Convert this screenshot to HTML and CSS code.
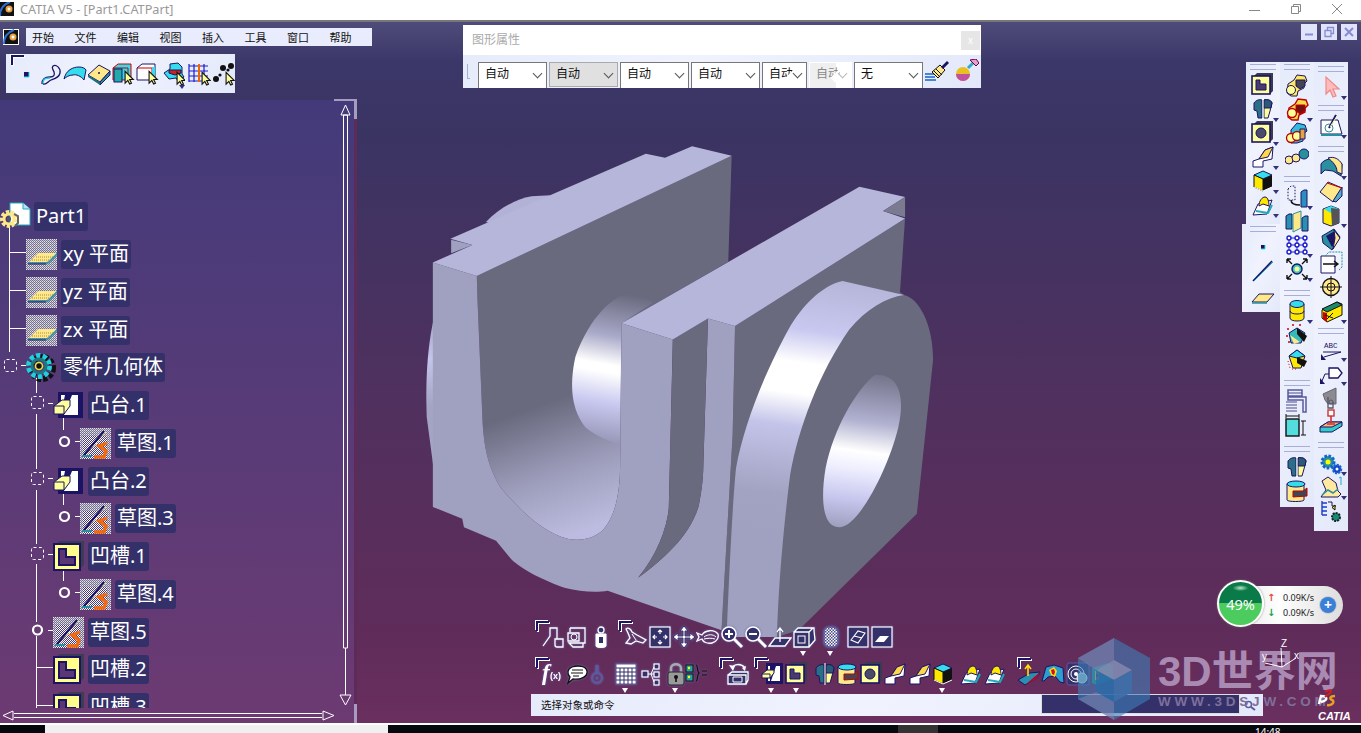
FILE: index.html
```html
<!DOCTYPE html>
<html lang="zh">
<head>
<meta charset="utf-8">
<title>CATIA V5 - [Part1.CATPart]</title>
<link rel="stylesheet" href="styles.css">
</head>
<body>
<svg class="defs" aria-hidden="true">
<defs>
<pattern id="chk" width="2" height="2" patternUnits="userSpaceOnUse"><rect width="2" height="2" fill="#77708f"/><rect width="1" height="1" fill="#e4e4ec"/><rect x="1" y="1" width="1" height="1" fill="#c4c4cc"/></pattern>
<pattern id="chk2" width="2" height="2" patternUnits="userSpaceOnUse"><rect width="2" height="2" fill="#4a3a80"/><rect width="1" height="1" fill="#fff"/><rect x="1" y="1" width="1" height="1" fill="#fff"/></pattern>
<pattern id="chk3" width="3" height="3" patternUnits="userSpaceOnUse"><rect width="3" height="3" fill="#fff"/><rect width="1.5" height="1.5" fill="#4a4a8a"/><rect x="1.5" y="1.5" width="1.5" height="1.5" fill="#4a4a8a"/></pattern>

<symbol id="cur" viewBox="0 0 24 24"><path d="M11 9v13l3-3 2 4 2-1-2-4h4z" fill="#ff9" stroke="#111" stroke-width="1.2"/></symbol>
<symbol id="t-pt" viewBox="0 0 24 24"><rect x="9" y="10" width="5" height="5" fill="#1b1464"/><path d="M14 10v5H9" fill="none" stroke="#3de" /></symbol>
<symbol id="t-curve" viewBox="0 0 24 24"><path d="M3 22c0-6 4-7 8-7s5-2 4-5-3-4-1-6c3-2 8 2 7 7s-6 6-9 7-4 5-8 4" fill="none" stroke="#1b1464" stroke-width="1.3"/><path d="M4 21c0-5 4-5 7-5" fill="none" stroke="#2ce" stroke-width="1.3"/></symbol>
<symbol id="t-surf" viewBox="0 0 24 24"><path d="M1 17C3 8 10 5 16 5c3 0 6 1 7 3l-2 10c-3-4-8-6-11-5-4 0-7 2-9 4z" fill="#3de" stroke="#1b1464"/></symbol>
<symbol id="t-box" viewBox="0 0 24 24"><path d="M1 13 12 3l11 6-10 11z" fill="#ffe88a" stroke="#1b1464"/><path d="M13 20 23 9v4L13 23z" fill="#2a8f9f" stroke="#1b1464"/><path d="M1 13l12 7v3L1 15z" fill="#1b6f7f"/><circle cx="12" cy="11" r="1" fill="#1b1464"/></symbol>
<symbol id="t-solid" viewBox="0 0 24 24"><path d="M2 6l5-4h13v13l-3 3H2z" fill="#3de" stroke="#c00"/><path d="M2 6h15v12" fill="none" stroke="#c00"/><rect x="3" y="7" width="8" height="13" fill="#2aa" stroke="#1b1464"/><use href="#cur" x="4" y="1" width="22" height="22"/></symbol>
<symbol id="t-wire" viewBox="0 0 24 24"><path d="M2 6l5-4h13v13l-3 3H2z" fill="#fff" stroke="#1b1464"/><path d="M2 6h15v12" fill="none" stroke="#c00"/><rect x="17" y="5" width="3" height="13" fill="#3de"/><use href="#cur" x="4" y="1" width="22" height="22"/></symbol>
<symbol id="t-multi" viewBox="0 0 24 24"><path d="M3 11l6-4V2l8-1 4 4v7l2 3-6 4-2-3-7 1z" fill="#3de" stroke="#1b1464"/><path d="M8 8h12v3l-6 2-6-2z" fill="#c22" stroke="#1b1464"/><use href="#cur" x="6" y="2" width="22" height="22"/></symbol>
<symbol id="t-grid" viewBox="0 0 24 24"><path d="M2 2v18M7 2v18M12 2v18M17 2v18M2 4h19M2 9h19M2 14h19M2 19h19" stroke="#1c1ccc" stroke-width="1.2" fill="none"/><path d="M12 2v18" stroke="#e60" stroke-width="2"/><use href="#cur" x="5" y="2" width="22" height="22"/></symbol>
<symbol id="t-dots" viewBox="0 0 24 24"><g fill="#111"><circle cx="5" cy="17" r="3"/><circle cx="9" cy="13" r="1.6"/><circle cx="12" cy="6" r="3"/><circle cx="20" cy="4" r="3"/><circle cx="17" cy="8" r="1.6"/></g><use href="#cur" x="5" y="2" width="22" height="22"/></symbol>

<symbol id="pocket" viewBox="0 0 24 24"><path d="M3 3 6 0h16v18l-3 3z" fill="#3a3a50"/><rect x="1" y="3" width="18" height="18" fill="#ff9" stroke="#1b1464" stroke-width="1.6"/><path d="M5 7h4v4h6v6H5z" fill="#4a3a70" stroke="#1b1464"/></symbol>
<symbol id="boss" viewBox="0 0 24 24"><rect x="6" y="1" width="17" height="21" fill="#1b1464"/><rect x="8" y="4" width="12" height="15" fill="#fff"/><path d="M10 4h6l-5 15h-1z" fill="#1b1464"/><path d="M2 12l5-4h7v3l-4 5H2z" fill="#ff9" stroke="#1b1464"/><path d="M2 12h8v4" fill="none" stroke="#1b1464"/></symbol>
<symbol id="split" viewBox="0 0 24 24"><path d="M3 6c2-3 6-4 8-3v18H7l-1-7-3-1z" fill="#2a6f85" stroke="#1b1464"/><path d="M13 3c3-1 7 0 8 3l-2 8-2 7h-4z" fill="#ff9" stroke="#1b1464"/><path d="M13 3c3-1 7 0 8 3l-1 5h-7z" fill="#2a5a75" stroke="#1b1464"/><path d="M12 1v22" stroke="#fff"/></symbol>
<symbol id="hole" viewBox="0 0 24 24"><path d="M3 3 6 0h16v18l-3 3z" fill="#3a3a50"/><rect x="1" y="3" width="18" height="18" fill="#ff9" stroke="#1b1464" stroke-width="1.6"/><circle cx="10" cy="12" r="5" fill="#4a4a6a" stroke="#1b1464"/></symbol>
<symbol id="rib" viewBox="0 0 24 24"><path d="M2 22v-6l6-2 6-9 8-3-1 12-9 2v6z" fill="#fff" stroke="#1b1464"/><path d="M8 14l6-9 8-3-5 10z" fill="#ffd84a" stroke="#1b1464"/></symbol>
<symbol id="sweep" viewBox="0 0 24 24"><path d="M2 22l5-11 14-4-5 14z" fill="#fff" stroke="#1b1464"/><path d="M8 13c0-5 3-9 6-9s4 5 4 9l-6-2z" fill="#ffe800" stroke="#1b1464"/><path d="M5 18l12 2 4-8" stroke="#2ab" stroke-width="2" fill="none"/></symbol>
<symbol id="cube" viewBox="0 0 24 24"><path d="M3 6l9-4 9 4-9 4z" fill="#3de" stroke="#1b1464"/><path d="M3 6v12l9 4V10z" fill="#ffe800" stroke="#111"/><path d="M12 10l9-4v12l-9 4z" fill="#111"/><path d="M3 18l9 4 9-4" fill="none" stroke="#fff"/></symbol>
<symbol id="r-pt" viewBox="0 0 24 24"><rect x="10" y="10" width="4" height="4" fill="#1b1464"/><path d="M14 10v4h-4" fill="none" stroke="#3de"/></symbol>
<symbol id="r-line" viewBox="0 0 24 24"><path d="M2 22 21 2" stroke="#1b1464" stroke-width="1.6"/><path d="M3 22 22 3" stroke="#2ac" stroke-width="1"/></symbol>
<symbol id="r-plane" viewBox="0 0 24 24"><path d="M1 19 8 11h15l-7 8z" fill="#ffe88a" stroke="#1b1464"/><path d="M1 20h15" stroke="#2a8f9f" stroke-width="1.5"/></symbol>

<symbol id="m-yel" viewBox="0 0 24 24"><path d="M3 11l6-4 3-5 8 1 2 5-3 3v4l-6 3-1 5H6l-4-3z" fill="#ffe860" stroke="#1b1464"/><circle cx="6" cy="17" r="4.5" fill="#ff9" stroke="#1b1464"/><path d="M11 7h9v6l-5 3-4-3z" fill="#445" stroke="#1b1464"/></symbol>
<symbol id="m-red" viewBox="0 0 24 24"><path d="M4 11l6-4 3-5 8 1 2 5-3 3v4l-6 3-1 5H7l-4-3z" fill="#ffd84a" stroke="#b00" stroke-width="1.4"/><circle cx="7" cy="16" r="4.5" fill="#ff9" stroke="#b00" stroke-width="1.4"/><path d="M11 8h9v6l-5 3-4-3z" fill="#711" stroke="#b00"/></symbol>
<symbol id="m-cyan" viewBox="0 0 24 24"><path d="M6 9l6-7 8 2 2 6-4 3v7l-6 2H6z" fill="#3bd" stroke="#1b1464"/><circle cx="6" cy="17" r="4.5" fill="#ff9" stroke="#b00" stroke-width="1.3"/><circle cx="12" cy="15" r="4.5" fill="#ff9" stroke="#b00" stroke-width="1.3"/><path d="M15 8h5v10h-5z" fill="#e8a040" stroke="#1b1464"/></symbol>
<symbol id="m-circ" viewBox="0 0 24 24"><circle cx="4" cy="15" r="4" fill="#ffe88a" stroke="#1b1464"/><circle cx="11" cy="13" r="4" fill="#ffe88a" stroke="#1b1464"/><circle cx="19" cy="9" r="5" fill="#2a8f9f" stroke="#1b1464"/></symbol>
<symbol id="m-trans" viewBox="0 0 24 24"><path d="M3 4l3-3h4v14H3z" fill="none" stroke="#1b1464" stroke-dasharray="1.5 1.5"/><path d="M6 15c0 4 3 5 9 5" fill="none" stroke="#111" stroke-width="1.5"/><path d="M16 7l3-2h3v17h-6z" fill="#2a8fc0" stroke="#1b1464"/></symbol>
<symbol id="m-mirror" viewBox="0 0 24 24"><path d="M1 7l3-2h3v15H1z" fill="#2a8fb0" stroke="#1b1464"/><path d="M8 5l8-3v17l-8 4z" fill="#ffe88a" stroke="#2a8f9f"/><path d="M17 9l3-2h3v15h-6z" fill="#2a8fb0" stroke="#1b1464"/></symbol>
<symbol id="m-dots" viewBox="0 0 24 24"><path d="M4 5h16M4 12h16M4 19h16M4 5v14M12 5v14M20 5v14" stroke="#1c1ccc" fill="none"/><g fill="#fff" stroke="#1c1ccc" stroke-width="1.4"><circle cx="4" cy="5" r="2"/><circle cx="12" cy="5" r="2"/><circle cx="20" cy="5" r="2"/><circle cx="4" cy="12" r="2"/><circle cx="12" cy="12" r="2"/><circle cx="20" cy="12" r="2"/><circle cx="4" cy="19" r="2"/><circle cx="12" cy="19" r="2"/><circle cx="20" cy="19" r="2"/></g></symbol>
<symbol id="m-scale" viewBox="0 0 24 24"><circle cx="12" cy="12" r="5" fill="#3cb" stroke="#1b1464" stroke-width="1.4"/><circle cx="12" cy="12" r="2.5" fill="#ff9"/><path d="M2 2l5 5M22 2l-5 5M2 22l5-5M22 22l-5-5M2 2h4M2 2v4M22 2h-4M22 2v4M2 22h4M2 22v-4M22 22h-4M22 22v-4" stroke="#111" stroke-width="1.4" fill="none"/></symbol>
<symbol id="m-cyl" viewBox="0 0 24 24"><path d="M5 5v14c0 4 14 4 14 0V5z" fill="#ffe800" stroke="#1b1464"/><ellipse cx="12" cy="5" rx="7" ry="3.5" fill="#3de" stroke="#1b1464"/><path d="M5 12c0 4 14 4 14 0" fill="none" stroke="#1b1464"/></symbol>
<symbol id="m-dot1" viewBox="0 0 24 24"><path d="M4 10l8-5 8 5-4 10H6z" fill="#3bb" stroke="#1b1464"/><path d="M12 5l10 8-3 6-7-8z" fill="#111"/><path d="M5 12l10 7-6 2z" fill="#ffe88a"/><circle cx="3" cy="6" r="1" fill="#c00"/><circle cx="8" cy="2" r="1" fill="#c00"/><circle cx="15" cy="2" r="1" fill="#c00"/><circle cx="2" cy="13" r="1" fill="#c00"/><circle cx="4" cy="19" r="1" fill="#c00"/></symbol>
<symbol id="m-dot2" viewBox="0 0 24 24"><path d="M4 9l8-6 8 6-4 12H8z" fill="#ffe800" stroke="#1b1464"/><path d="M4 9l8-6 8 6-8 2z" fill="#3de" stroke="#1b1464"/><path d="M12 10l10 4-3 6-7-4z" fill="#111"/><path d="M3 14l2 7M7 22h6" stroke="#c00" stroke-dasharray="1 2"/></symbol>
<symbol id="m-frame" viewBox="0 0 24 24"><path d="M3 1h14v6H3zM3 8h18v15h-3V11H3z" fill="none" stroke="#5a5a9a" stroke-width="1.5"/><path d="M1 13h11M1 16h11M1 19h11M1 22h11M3 4h14" stroke="#4a4a8a"/></symbol>
<symbol id="m-dim" viewBox="0 0 24 24"><rect x="1" y="6" width="13" height="17" fill="#5dd" stroke="#111" stroke-width="1.4"/><path d="M1 3h13M1 1v4M14 1v4M18 8v14M16 8h5M16 22h5" stroke="#111" fill="none"/></symbol>
<symbol id="m-cut" viewBox="0 0 24 24"><path d="M2 5v16c0 2 17 2 17 0V5z" fill="#ffe88a" stroke="#1b1464"/><ellipse cx="11" cy="5" rx="9" ry="3" fill="#3de" stroke="#1b1464"/><path d="M8 12h10l4-3v8l-14 1z" fill="#445" stroke="#b00"/></symbol>
<symbol id="arrow" viewBox="0 0 24 24"><path d="M7 2v17l4-4 3 7 3-1-3-7h6z" fill="#fbb" stroke="#e88" stroke-width="1.2"/></symbol>
<symbol id="m-skt" viewBox="0 0 24 24"><path d="M2 20V6h17l4 14z" fill="#fff" stroke="#1b1464"/><path d="M2 21h21" stroke="#2a8f9f" stroke-width="2"/><circle cx="10" cy="14" r="4" fill="none" stroke="#2a8f9f"/><path d="M10 14 17 1" stroke="#1b1464" stroke-width="2"/><path d="M11 13 18 2" stroke="#ff9"/></symbol>
<symbol id="f-1" viewBox="0 0 24 24"><path d="M2 19V9c3-5 12-7 18-3l3 3-1 12-8-5-8-1z" fill="#2a8f9f" stroke="#1b1464"/><path d="M9 3c6-2 11 1 14 6v10l-5-2c0-6-4-10-9-14z" fill="#ffe88a" stroke="#1b1464"/></symbol>
<symbol id="f-2" viewBox="0 0 24 24"><path d="M1 13 9 3l14 6-9 14z" fill="#ffe88a" stroke="#1b1464"/><path d="M14 22l9-14v9l-6 6z" fill="#5ac" stroke="#1b1464"/><path d="M9 3l-1 1 15 5" stroke="#c00" fill="none"/></symbol>
<symbol id="f-3" viewBox="0 0 24 24"><path d="M4 6l8-3 8 3v14l-8 3-8-3z" fill="#ffe800" stroke="#1b1464"/><path d="M5 6l7-3 8 3-8 4z" fill="#3de"/><path d="M12 5l8 1v14l-7 3z" fill="#555"/></symbol>
<symbol id="f-4" viewBox="0 0 24 24"><path d="M3 9 15 2l6 8-8 13-9-7z" fill="#2a8f9f" stroke="#1b1464"/><path d="M7 9l9-5 4 6-7 10z" fill="#1b1464"/><path d="M15 3l6 8-7 11 2-11z" fill="#ffe88a" stroke="#1b1464"/></symbol>
<symbol id="f-5" viewBox="0 0 24 24"><path d="M2 5h14v17H2z" fill="#fff" stroke="#1b1464"/><path d="M6 5l4-4h13v15l-3 3" fill="none" stroke="#2a8f9f" stroke-dasharray="2 1"/><path d="M4 13h14M15 10l4 3-4 3" stroke="#111" stroke-width="1.3" fill="none"/></symbol>
<symbol id="f-6" viewBox="0 0 24 24"><circle cx="12" cy="12" r="8.5" fill="#ffe88a" stroke="#111" stroke-width="1.3"/><circle cx="12" cy="12" r="4" fill="none" stroke="#111"/><path d="M12 1v22M1 12h22" stroke="#111"/></symbol>
<symbol id="f-7" viewBox="0 0 24 24"><path d="M3 11 18 3l5 2v11L8 23l-5-4z" fill="#ffe800" stroke="#111"/><path d="M3 10 18 3l5 3-15 7z" fill="#1a8a6a" stroke="#111"/><path d="M4 13l4 1v9l-4-3z" fill="#c00"/><path d="M6 16l8 3M14 14l-6 6" stroke="#111"/></symbol>
<symbol id="abc" viewBox="0 0 24 24"><text x="5" y="11" class="abc-text">ABC</text><path d="M4 15h18L5 20" fill="none" stroke="#1b1464"/><path d="M2 17v6h5z" fill="#1b1464"/></symbol>
<symbol id="flag" viewBox="0 0 24 24"><path d="M10 7h9l4 5-4 5h-9z" fill="#fff" stroke="#1b1464" stroke-width="1.3"/><path d="M10 13H6l-3 7" fill="none" stroke="#1b1464"/><path d="M1 17v6h5z" fill="#1b1464"/></symbol>
<symbol id="gray" viewBox="0 0 24 24"><path d="M4 9l13-6v16H9l-3-4z" fill="#8a8a90" stroke="#667"/><path d="M9 12v11h5v-6" fill="none" stroke="#556" stroke-width="1.3"/><circle cx="12" cy="17" r="2" fill="none" stroke="#556"/></symbol>
<symbol id="pad" viewBox="0 0 24 24"><path d="M1 18l8-5h14v4l-10 6H1z" fill="#3cc" stroke="#1b1464"/><path d="M1 18l8-5h14l-10 5z" fill="#ffb080" stroke="#1b1464"/><rect x="9" y="1" width="6" height="6" fill="#fff" stroke="#c33" stroke-width="1.4"/><path d="M12 7v7M8 15h8" stroke="#c33" stroke-width="1.6"/></symbol>
<symbol id="gears" viewBox="0 0 24 24"><circle cx="9" cy="11" r="6" fill="#2a8f9f" stroke="#16c" stroke-width="3" stroke-dasharray="2.5 1.5"/><circle cx="9" cy="11" r="2.5" fill="#ff0"/><circle cx="18" cy="18" r="4" fill="#1c3ccc" stroke="#16c" stroke-width="2.5" stroke-dasharray="2 1"/><circle cx="18" cy="18" r="1.5" fill="#fff"/></symbol>
<symbol id="leaf" viewBox="0 0 24 24"><path d="M2 22 7 15 3 6l6-4 8 6 2 8 3 3-3 3z" fill="#ffe8a0" stroke="#1b1464"/><path d="M3 20l6-5 5 3 5-4" fill="none" stroke="#2a8f9f" stroke-width="1.5"/><path d="M20 3l2-1v8" stroke="#2ac" fill="none"/></symbol>
<symbol id="treegear" viewBox="0 0 24 24"><path d="M3 2v14M3 4h5M3 8h5M3 12h5M3 16h5" stroke="#1c3ccc" stroke-width="1.4" fill="none"/><path d="M9 3h4v4h4" stroke="#1b1464" fill="none"/><path d="M16 6l-3 2.5 3 2.5z" fill="#ffe000" stroke="#111"/><circle cx="17" cy="18" r="4" fill="#1a8a6a" stroke="#123" stroke-width="2" stroke-dasharray="2 1"/></symbol>

<symbol id="b-a" viewBox="0 0 24 24"><path d="M2 21 9 11V3h7v11M14 14h8v8h-6c-1 0-2-1-2-2z" fill="none" stroke="#fff" stroke-width="1.3"/></symbol>
<symbol id="b-b" viewBox="0 0 24 24"><path d="M5 3h15v15h-4M5 3v4M3 8h11v8H3zM4 18h14v4H8z" fill="none" stroke="#fff" stroke-width="1.3"/><circle cx="9" cy="12" r="3" fill="none" stroke="#fff"/></symbol>
<symbol id="b-c" viewBox="0 0 24 24"><path d="M7 9h10v12c0 2-10 2-10 0z" fill="#fff" stroke="#fff"/><circle cx="12" cy="5" r="3" fill="#34306a" stroke="#fff" stroke-width="1.3"/><path d="M10 12h4v6h-4z" fill="#34306a"/></symbol>
<symbol id="b-d" viewBox="0 0 24 24"><path d="M2 4c2-2 5 0 6 3l5 3 9 5-3 3-7-2-5 3-5-1 4-5-2-5z" fill="none" stroke="#fff" stroke-width="1.3"/><path d="M8 9l4 6" stroke="#fff"/></symbol>
<symbol id="b-e" viewBox="0 0 24 24"><rect x="2" y="2" width="20" height="20" fill="#34306a" stroke="#fff" stroke-width="1.2"/><path d="M12 5v4M12 15v4M5 12h4M15 12h4M10 7l2-2 2 2M10 17l2 2 2-2M7 10l-2 2 2 2M17 10l2 2-2 2" fill="none" stroke="#fff" stroke-width="1.2"/></symbol>
<symbol id="b-f" viewBox="0 0 24 24"><path d="M12 1l4 5h-3v5h5V8l5 4-5 4v-3h-5v5h3l-4 5-4-5h3v-5H6v3l-5-4 5-4v3h5V6H8z" fill="#fff" stroke="#34306a"/></symbol>
<symbol id="b-g" viewBox="0 0 24 24"><path d="M1 8l5 2c3-5 12-6 16-1 1 3-1 8-6 9-5 1-9-1-10-4l-5 2 2-4z" fill="none" stroke="#fff" stroke-width="1.3"/><path d="M8 12c4-3 9-3 12 0M8 14c4-1 8-1 11 0" stroke="#fff" fill="none"/></symbol>
<symbol id="b-h" viewBox="0 0 24 24"><circle cx="9" cy="9" r="7" fill="#34306a" stroke="#fff" stroke-width="1.6"/><path d="M14 14l8 8" stroke="#fff" stroke-width="3"/><path d="M5 9h8M9 5v8" stroke="#fff" stroke-width="2"/></symbol>
<symbol id="b-i" viewBox="0 0 24 24"><circle cx="9" cy="9" r="7" fill="#34306a" stroke="#fff" stroke-width="1.6"/><path d="M14 14l8 8" stroke="#fff" stroke-width="3"/><path d="M5 9h8" stroke="#fff" stroke-width="2"/></symbol>
<symbol id="b-j" viewBox="0 0 24 24"><path d="M1 21 7 13h16l-6 8zM12 17V4M9 7l3-4 3 4" fill="#34306a" stroke="#fff" stroke-width="1.3"/></symbol>
<symbol id="b-k" viewBox="0 0 24 24"><path d="M2 7h15v15H2zM2 7l4-4h8l8 0v3l1 9-6 7M17 7l4-4" fill="#34306a" stroke="#fff" stroke-width="1.3"/><rect x="6" y="11" width="7" height="7" fill="none" stroke="#fff"/></symbol>
<symbol id="b-l" viewBox="0 0 24 24"><rect x="5" y="2" width="14" height="20" rx="5" fill="url(#chk3)" stroke="#5a5a9a" stroke-width="1.5"/></symbol>
<symbol id="b-m" viewBox="0 0 24 24"><rect x="2" y="2" width="20" height="20" fill="#34306a" stroke="#fff" stroke-width="1.2"/><path d="M5 15l7-9 7 2-7 10zM5 15l7 3M8 11l8 2" fill="none" stroke="#fff" stroke-width="1.1"/></symbol>
<symbol id="b-n" viewBox="0 0 24 24"><rect x="2" y="2" width="20" height="20" fill="#34306a" stroke="#fff" stroke-width="1.2"/><path d="M5 17l5-6h9l-5 6z" fill="#fff"/></symbol>
<symbol id="b-fx" viewBox="0 0 24 24"><text x="1" y="18" class="fx-f">f</text><text x="9" y="17" class="fx-x">(x)</text></symbol>
<symbol id="b-chat" viewBox="0 0 24 24"><path d="M3 21l2-6c-3-3-3-8 2-10 6-2 14-1 15 4 1 6-7 9-14 8z" fill="#fff" stroke="#111" stroke-width="1.3"/><path d="M7 8h11M6 11h12M8 14h6" stroke="#111"/></symbol>
<symbol id="b-bottle" viewBox="0 0 24 24"><circle cx="12" cy="16" r="5" fill="none" stroke="#5a5aa0" stroke-width="2"/><circle cx="12" cy="16" r="1.5" fill="#5a5aa0"/><path d="M12 3v8" stroke="#5a5aa0" stroke-width="3"/></symbol>
<symbol id="b-cal" viewBox="0 0 24 24"><rect x="2" y="2" width="20" height="20" fill="#fff" stroke="#5a5a9a"/><path d="M2 6h20M2 10h20M2 14h20M2 18h20M6 6v16M10 6v16M14 6v16M18 6v16" stroke="#34306a"/></symbol>
<symbol id="b-tree" viewBox="0 0 24 24"><g fill="#34306a" stroke="#fff" stroke-width="1.2"><rect x="1" y="9" width="6" height="6"/><rect x="13" y="2" width="5" height="5"/><rect x="13" y="10" width="5" height="5"/><rect x="13" y="18" width="5" height="5"/></g><path d="M7 12h6M10 12l3-7M10 12l3 8" stroke="#fff" fill="none"/></symbol>
<symbol id="b-lock" viewBox="0 0 24 24"><path d="M7 11V6c0-5 10-5 10 0v5" fill="none" stroke="#aaa" stroke-width="2.5"/><rect x="4" y="10" width="16" height="13" rx="2" fill="#9a9a9a" stroke="#222"/><circle cx="12" cy="15" r="2" fill="#111"/><path d="M12 15v5" stroke="#111" stroke-width="1.6"/></symbol>
<symbol id="b-set" viewBox="0 0 24 24"><rect x="1" y="3" width="7" height="7" fill="#2a9f9f" stroke="#111"/><rect x="1" y="12" width="7" height="7" fill="#2a9f9f" stroke="#111"/><circle cx="4" cy="6" r="1.2" fill="#ff0"/><circle cx="4" cy="15" r="1.2" fill="#ff0"/><path d="M11 3c2 0 1 7 3 8-2 1-1 8-3 8M17 9h5M17 13h5" fill="none" stroke="#111" stroke-width="1.2"/></symbol>
<symbol id="b-rot" viewBox="0 0 24 24"><path d="M2 13h18v9H2zM2 13l4-3h16v8l-2 4" fill="#34306a" stroke="#fff" stroke-width="1.3"/><path d="M7 15h9v5H7z" fill="none" stroke="#fff"/><path d="M6 6c2-4 9-5 13 0" fill="none" stroke="#fff" stroke-width="1.5"/><path d="M3 3l6 1-2 5zM19 9l-3-3 4-2z" fill="#fff"/></symbol>
<symbol id="b-an1" viewBox="0 0 24 24"><path d="M1 18l12-7 10-1-3 6-12 7z" fill="#2a8fb0" stroke="#1b1464"/><path d="M8 23l15-13-3 7-12 6z" fill="#a01030"/><path d="M11 14V3M8 7l3-4 3 4" stroke="#ffe000" stroke-width="1.6" fill="none"/><path d="M5 9l5 4" stroke="#a01030"/></symbol>
<symbol id="b-an2" viewBox="0 0 24 24"><path d="M1 19 5 5l8-2 9 3 1 15-4-1-5-6-7 1-4 4z" fill="#2a9fd0" stroke="#1b1464"/><path d="M8 8l5-3 3 4-2 6-4-2z" fill="#ffe000"/><path d="M10 8l3-1 1 3-1 3-2-1z" fill="#d01030"/></symbol>
<symbol id="b-an3" viewBox="0 0 24 24"><rect x="1" y="1" width="22" height="22" rx="2" fill="#34306a" stroke="#5a5aa0"/><circle cx="10" cy="12" r="8" fill="none" stroke="#fff"/><circle cx="10" cy="12" r="5" fill="none" stroke="#fff"/><circle cx="10" cy="12" r="2" fill="#fff"/><circle cx="16" cy="16" r="5" fill="#9cc" stroke="#fff"/></symbol>
<symbol id="b-an4" viewBox="0 0 24 24"><path d="M2 6l16-5 5 2v14l-16 6-5-2z" fill="#1f8f90"/><rect x="5" y="9" width="4" height="9" fill="#e2c020"/><rect x="6" y="12" width="2" height="3" fill="#c00"/><path d="M11 11h7" stroke="#c62" stroke-width="2"/></symbol>

<symbol id="tr-part" viewBox="0 0 31 31"><path d="M10 2h13l7 6v16H10z" fill="#fff" stroke="#2ab" stroke-width="1"/><path d="M23 2v6h7" fill="#bdf" stroke="#2ab"/><circle cx="9" cy="18" r="6.5" fill="none" stroke="#ffe88a" stroke-width="5" stroke-dasharray="3 1.5"/><circle cx="9" cy="18" r="5" fill="none" stroke="#ffe88a" stroke-width="3"/><circle cx="9" cy="18" r="2.2" fill="#555"/><path d="M14 13l4 2v7l-3 3" stroke="#666" stroke-width="2" fill="none"/></symbol>
<symbol id="tr-plane" viewBox="0 0 31 31"><rect width="31" height="31" fill="url(#chk)"/><path d="M3 23 12 14h19l-10 9z" fill="#ffe88a"/><path d="M10 18h18M6 21h18" stroke="#a88a40" stroke-dasharray="1 1"/><path d="M2 24h20l10-10" fill="none" stroke="#2a8f9f" stroke-width="1.6"/><path d="M2 25h18" stroke="#1b1464"/></symbol>
<symbol id="tr-body" viewBox="0 0 31 31"><circle cx="16" cy="16" r="11" fill="none" stroke="#111" stroke-width="6" stroke-dasharray="4 2"/><circle cx="13" cy="14" r="10" fill="none" stroke="#1fd0e0" stroke-width="6" stroke-dasharray="4 2.3"/><circle cx="13" cy="14" r="7" fill="none" stroke="#1a7a80" stroke-width="3"/><circle cx="13" cy="14" r="3.5" fill="#111" stroke="#e8e040" stroke-width="1.6"/></symbol>
<symbol id="tr-boss" viewBox="0 0 31 31"><rect x="5" y="2" width="25" height="26" fill="#1b1464"/><rect x="8" y="5" width="17" height="20" fill="#fff"/><path d="M12 5h7l-8 20H8z" fill="#1b1464"/><path d="M1 16l8-6h8v6l-6 8H1z" fill="#ffff99" stroke="#1b1464"/><path d="M1 16h10v8" fill="none" stroke="#1b1464"/></symbol>
<symbol id="tr-pocket" viewBox="0 0 31 31"><path d="M3 3 7 0h24v24l-4 4z" fill="#3c3c52"/><rect x="1" y="3" width="26" height="26" fill="#ffff8a" stroke="#1b1464" stroke-width="2"/><path d="M6 8h7v8h9v8H6z" fill="#5b3875" stroke="#1b1464" stroke-width="2"/></symbol>
<symbol id="tr-sketch" viewBox="0 0 31 31"><rect width="31" height="31" fill="url(#chk)"/><rect x="3" y="8" width="24" height="23" fill="url(#chk2)"/><path d="M4 27 24 3" stroke="#1b1464" stroke-width="2"/><path d="M6 28 26 4" stroke="#ffe88a" stroke-width="1" stroke-dasharray="2 1"/><path d="M2 28h10" stroke="#2a8f9f" stroke-width="2"/><path d="M27 15l-8 3 7 5-2 6-10 0" fill="none" stroke="#ef6a10" stroke-width="3.4"/></symbol>
</defs>
</svg>

<header class="titlebar">
  <svg class="app-logo" viewBox="0 0 14 14"><rect width="14" height="14" fill="#111"/><path d="M0 14C0 7 4 2 10 0" fill="none" stroke="#2a6fd0" stroke-width="2"/><circle cx="9" cy="7" r="3.5" fill="#e8a040"/><circle cx="9" cy="7" r="1.5" fill="#fff"/></svg>
  <span class="title-text">CATIA V5 - [Part1.CATPart]</span>
  <div class="win-controls">
    <svg class="win-btn" viewBox="0 0 12 12"><path d="M0 7.5h11" stroke="#888"/></svg>
    <svg class="win-btn" viewBox="0 0 12 12"><path d="M1.5 3.5h7v7h-7zM3.5 3.5v-2h7v7h-2" fill="none" stroke="#888"/></svg>
    <svg class="win-btn" viewBox="0 0 12 12"><path d="M1 1l10 10M11 1L1 11" stroke="#888"/></svg>
  </div>
</header>

<main class="workspace">
  <svg class="model" viewBox="0 0 1568 1568">
    <defs>
      <linearGradient id="gBump" gradientUnits="userSpaceOnUse" x1="0" y1="540" x2="0" y2="1000"><stop offset="0" stop-color="#a0a0c0"/><stop offset=".3" stop-color="#c4c4ec"/><stop offset=".6" stop-color="#a4a4c4"/></linearGradient>
      <linearGradient id="gU" gradientUnits="userSpaceOnUse" x1="310" y1="830" x2="440" y2="1200"><stop offset="0" stop-color="#696a7e"/><stop offset=".5" stop-color="#9a9ab8"/><stop offset="1" stop-color="#bcbce0"/></linearGradient>
      <linearGradient id="gH1" gradientUnits="userSpaceOnUse" x1="580" y1="480" x2="500" y2="930"><stop offset="0" stop-color="#696a7e"/><stop offset=".28" stop-color="#a8a8c8"/><stop offset=".47" stop-color="#fff"/><stop offset=".52" stop-color="#fff"/><stop offset=".72" stop-color="#c8c8f0"/><stop offset="1" stop-color="#9090b0"/></linearGradient>
      <linearGradient id="gBoss" gradientUnits="userSpaceOnUse" x1="1230" y1="450" x2="1130" y2="1200"><stop offset="0" stop-color="#b6b6da"/><stop offset=".2" stop-color="#c8c8f0"/><stop offset=".33" stop-color="#fff"/><stop offset=".45" stop-color="#fff"/><stop offset=".58" stop-color="#c4c4ea"/><stop offset=".85" stop-color="#a2a2c2"/><stop offset="1" stop-color="#a0a0c0"/></linearGradient>
      <linearGradient id="gH2" gradientUnits="userSpaceOnUse" x1="1330" y1="725" x2="1270" y2="1175"><stop offset="0" stop-color="#76768e"/><stop offset=".3" stop-color="#b0b0d0"/><stop offset=".5" stop-color="#fff"/><stop offset=".62" stop-color="#eeeeff"/><stop offset=".82" stop-color="#c6c6ee"/><stop offset="1" stop-color="#a0a0c0"/></linearGradient>
    </defs>
    <path d="M195 272C230 235 280 205 330 196L385 193 300 300z" fill="#b2b2d6"/>
    <path d="M45 540C25 620 15 720 20 850L40 1000z" fill="url(#gBump)"/>
    <path d="M92 325 155 340 92 365z" fill="#a0a0c0"/>
    <path d="M168 432 922 76 912 390 596 572 592 1000C590 1100 570 1150 540 1185 510 1212 470 1215 440 1210 370 1195 300 1130 240 1060 210 1010 190 960 185 860L170 500z" fill="url(#gU)"/>
    <path d="M640 480C570 480 500 560 460 670 440 760 450 830 490 880 520 905 560 920 592 932L596 572 690 510z" fill="url(#gH1)"/>
    <path d="M932 580 1435 262 1420 480 1432 488C1480 500 1518 580 1518 680L1470 1135 1120 1480 1056 1500 907 1500 892 1480 925 900z" fill="#696a7e"/>
    <path d="M38 392 168 432 170 500 185 860C190 960 210 1010 240 1060 300 1130 370 1195 440 1210 470 1215 510 1212 540 1185 570 1150 590 1100 592 1000L596 572 748 620 736 1120C730 1180 700 1260 645 1325 720 1270 800 1200 825 1110 835 1060 838 1020 838 1000L852 558 932 580 925 900 892 1480 555 1363C520 1370 470 1365 430 1355 370 1335 300 1300 270 1270L225 1215 130 1175 125 1150 38 1115z" fill="#a0a0c0"/>
    <path d="M748 620 852 558 838 1000C838 1020 835 1060 825 1110 800 1200 720 1270 645 1325 700 1260 730 1180 736 1120z" fill="#696a7e"/>
    <path d="M38 392 155 340 90 322 190 278 668 70 725 82 805 48 922 76 168 432z" fill="#b6b6da"/>
    <path d="M596 572 1300 168 1435 198 1370 240 1435 262 932 580 852 558 748 620z" fill="#b6b6da"/>
    <path d="M1370 240 1435 198 1435 258z" fill="#7a7b90"/>
    <path d="M1250 447C1190 460 1130 520 1090 590 1030 700 960 860 935 1000 925 1100 915 1300 907 1500L1056 1500C1060 1350 1075 1180 1095 1020 1120 880 1180 720 1270 590 1320 530 1380 495 1432 488z" fill="url(#gBoss)"/>
    <path d="M1345 725C1290 770 1225 880 1200 1000 1185 1090 1190 1175 1240 1175 1290 1180 1380 1020 1415 880 1435 790 1420 720 1345 725z" fill="url(#gH2)"/>
  </svg>

  <nav class="menu-row">
    <svg class="menu-logo" viewBox="0 0 16 16"><rect width="16" height="16" fill="#fff"/><rect x="1" y="1" width="14" height="14" fill="#111"/><path d="M1 15C1 8 5 3 11 1" fill="none" stroke="#2a6fd0" stroke-width="2"/><circle cx="10" cy="8" r="3.5" fill="#e8a040"/><circle cx="10" cy="8" r="1.5" fill="#fff"/></svg>
    <ul class="menu">
      <li>开始</li><li>文件</li><li>编辑</li><li>视图</li><li>插入</li><li>工具</li><li>窗口</li><li>帮助</li>
    </ul>
  </nav>

  <section class="tb-top panel">
    <span class="hnd hnd-top"></span>
    <i class="ic"><svg><use href="#t-pt"/></svg></i>
    <i class="ic"><svg><use href="#t-curve"/></svg></i>
    <i class="ic"><svg><use href="#t-surf"/></svg></i>
    <i class="ic"><svg><use href="#t-box"/></svg></i>
    <i class="ic"><svg><use href="#t-solid"/></svg></i>
    <i class="ic"><svg><use href="#t-wire"/></svg></i>
    <i class="ic dd-n wide"><svg><use href="#t-multi"/></svg></i>
    <i class="ic"><svg><use href="#t-grid"/></svg></i>
    <i class="ic"><svg><use href="#t-dots"/></svg></i>
  </section>

  <section class="tree">
    <svg class="tree-lines" viewBox="0 100 353 610">
      <g class="tl">
        <path d="M9.5 228V352M10 252.5H26M10 290.5H26M10 328.5H26"/>
        <path d="M21 365.5h5M36.5 378V393M48 403.5h5M36.5 414V469M63.5 417V430M75 441.5h5"/>
        <path d="M36.5 490V544M48 478.5h5M63.5 492V505M75 516.5h5M48 554.5h5M36.5 564V622M63.5 568V581M75 592.5h5"/>
        <path d="M48 630.5h5M36.5 636V708M36.5 667.5H53M36.5 705.5H53"/>
      </g>
      <g class="tl tl-dash">
        <rect x="4.5" y="359.5" width="12" height="12" rx="2"/>
        <rect x="31.5" y="396.5" width="12" height="12" rx="2"/>
        <rect x="31.5" y="472.5" width="12" height="12" rx="2"/>
        <rect x="31.5" y="547.5" width="12" height="12" rx="2"/>
      </g>
      <g class="tl tl-ring">
        <circle cx="64.5" cy="441.5" r="4.5"/>
        <circle cx="64.5" cy="516.5" r="4.5"/>
        <circle cx="64.5" cy="592.5" r="4.5"/>
        <circle cx="37.5" cy="630" r="4.5"/>
      </g>
    </svg>
    <ul class="tree-list">
      <li class="row l0"><svg class="node"><use href="#tr-part"/></svg><span class="label">Part1</span></li>
      <li class="row l1"><svg class="node"><use href="#tr-plane"/></svg><span class="label">xy 平面</span></li>
      <li class="row l1"><svg class="node"><use href="#tr-plane"/></svg><span class="label">yz 平面</span></li>
      <li class="row l1"><svg class="node"><use href="#tr-plane"/></svg><span class="label">zx 平面</span></li>
      <li class="row l1"><svg class="node"><use href="#tr-body"/></svg><span class="label">零件几何体</span></li>
      <li class="row l2"><svg class="node"><use href="#tr-boss"/></svg><span class="label">凸台.1</span></li>
      <li class="row l3"><svg class="node"><use href="#tr-sketch"/></svg><span class="label">草图.1</span></li>
      <li class="row l2"><svg class="node"><use href="#tr-boss"/></svg><span class="label">凸台.2</span></li>
      <li class="row l3"><svg class="node"><use href="#tr-sketch"/></svg><span class="label">草图.3</span></li>
      <li class="row l2"><svg class="node"><use href="#tr-pocket"/></svg><span class="label">凹槽.1</span></li>
      <li class="row l3"><svg class="node"><use href="#tr-sketch"/></svg><span class="label">草图.4</span></li>
      <li class="row l2"><svg class="node"><use href="#tr-sketch"/></svg><span class="label">草图.5</span></li>
      <li class="row l2"><svg class="node"><use href="#tr-pocket"/></svg><span class="label">凹槽.2</span></li>
      <li class="row l2"><svg class="node"><use href="#tr-pocket"/></svg><span class="label">凹槽.3</span></li>
    </ul>
    <svg class="tree-bars" viewBox="0 0 357 625">
      <path class="bar-frame" d="M334 0.500H355.500V20"/>
      <path class="bar-strip" d="M355.500 20V605"/>
      <path class="bar-frame" d="M355.500 605V625"/>
      <path class="bar-white" d="M343.500 16V549M347.500 16V549M343.500 16h4M343.500 549h4M345.500 549V596M340 596H351L345.500 606z M345.500 6 341 16H350z"/>
      <path class="bar-white" d="M14 614.500H322M14 618.500H322M13 612V621L3 616.500zM323 612V621L334 616.500z"/>
    </svg>
  </section>

  <section class="gfx panel">
    <header class="gfx-title"><span>图形属性</span><b class="gfx-close">x</b></header>
    <div class="gfx-body">
      <span class="gfx-grip"></span>
      <span class="sel w69">自动</span>
      <span class="sel w69 sel-on">自动</span>
      <span class="sel w69">自动</span>
      <span class="sel w69">自动</span>
      <span class="sel w45">自动</span>
      <span class="sel w43 sel-off">自动</span>
      <span class="sel w69">无</span>
      <svg class="gfx-ic" viewBox="0 0 24 24"><path d="M0 15h9M0 18h10M0 21h11" stroke="#16c" stroke-width="1.5"/><path d="M7 13l8-7 5 5-7 8z" fill="#ffe88a" stroke="#111"/><path d="M16 8l6-6 2 2-6 6z" fill="#1b1464"/><path d="M9 12l6 6M11 10l6 6" stroke="#111"/></svg>
      <svg class="gfx-ic gap" viewBox="0 0 24 24"><circle cx="8" cy="15" r="7" fill="#e8c020"/><path d="M1 15a7 7 0 0 0 14 0" fill="#c050a0"/><path d="M13 9l7-7" stroke="#3ac" stroke-width="3"/><path d="M15 1l6-1 3 4-3 3z" fill="#e8a0c0" stroke="#606"/></svg>
    </div>
  </section>

  <div class="mdi">
    <span class="mdi-b"><svg viewBox="0 0 16 16"><path d="M4 10.500h8" stroke="#8a8ad0" stroke-width="2"/></svg></span>
    <span class="mdi-b"><svg viewBox="0 0 16 16"><path d="M4 6.500h6v6H4zM6.500 6V3.500h6v6H10" fill="none" stroke="#8a8ad0" stroke-width="1.3"/></svg></span>
    <span class="mdi-b"><svg viewBox="0 0 16 16"><path d="M4 4l8 8M12 4l-8 8" stroke="#8a8ad0" stroke-width="2"/></svg></span>
  </div>

  <aside class="vtb col1 panel">
    <span class="hd h11"></span>
    <i class="ic"><svg><use href="#pocket"/></svg></i>
    <i class="ic dd-r"><svg><use href="#split"/></svg></i>
    <i class="ic dd-r"><svg><use href="#hole"/></svg></i>
    <i class="ic dd-r"><svg><use href="#rib"/></svg></i>
    <i class="ic dd-r"><svg><use href="#cube"/></svg></i>
    <i class="ic dd-r"><svg><use href="#sweep"/></svg></i>
  </aside>
  <aside class="vtb col1b panel">
    <span class="hd h11"></span>
    <i class="ic"><svg><use href="#r-pt"/></svg></i>
    <i class="ic"><svg><use href="#r-line"/></svg></i>
    <i class="ic"><svg><use href="#r-plane"/></svg></i>
  </aside>
  <aside class="vtb col2 panel">
    <span class="hd h11"></span>
    <i class="ic"><svg><use href="#m-yel"/></svg></i>
    <i class="ic dd-r"><svg><use href="#m-red"/></svg></i>
    <i class="ic"><svg><use href="#m-cyan"/></svg></i>
    <i class="ic"><svg><use href="#m-circ"/></svg></i>
    <span class="hd h16"></span>
    <i class="ic dd-r"><svg><use href="#m-trans"/></svg></i>
    <i class="ic"><svg><use href="#m-mirror"/></svg></i>
    <i class="ic dd-r"><svg><use href="#m-dots"/></svg></i>
    <i class="ic dd-r"><svg><use href="#m-scale"/></svg></i>
    <span class="hd h18"></span>
    <i class="ic dd-r"><svg><use href="#m-cyl"/></svg></i>
    <i class="ic"><svg><use href="#m-dot1"/></svg></i>
    <i class="ic"><svg><use href="#m-dot2"/></svg></i>
    <span class="hd h18"></span>
    <i class="ic"><svg><use href="#m-frame"/></svg></i>
    <i class="ic"><svg><use href="#m-dim"/></svg></i>
    <span class="hd h18"></span>
    <i class="ic"><svg><use href="#split"/></svg></i>
    <i class="ic"><svg><use href="#m-cut"/></svg></i>
  </aside>
  <aside class="vtb col3 panel">
    <span class="hd h13"></span>
    <i class="ic dd-r"><svg><use href="#arrow"/></svg></i>
    <span class="hd h15"></span>
    <i class="ic dd-r"><svg><use href="#m-skt"/></svg></i>
    <span class="hd h17"></span>
    <i class="ic dd-r"><svg><use href="#f-1"/></svg></i>
    <i class="ic"><svg><use href="#f-2"/></svg></i>
    <i class="ic dd-r"><svg><use href="#f-3"/></svg></i>
    <i class="ic"><svg><use href="#f-4"/></svg></i>
    <i class="ic"><svg><use href="#f-5"/></svg></i>
    <i class="ic"><svg><use href="#f-6"/></svg></i>
    <i class="ic dd-r"><svg><use href="#f-7"/></svg></i>
    <span class="hd h14"></span>
    <i class="ic dd-r"><svg><use href="#abc"/></svg></i>
    <i class="ic dd-r"><svg><use href="#flag"/></svg></i>
    <i class="ic"><svg><use href="#gray"/></svg></i>
    <i class="ic"><svg><use href="#pad"/></svg></i>
    <span class="hd h18"></span>
    <i class="ic dd-r"><svg><use href="#gears"/></svg></i>
    <i class="ic dd-r"><svg><use href="#leaf"/></svg></i>
    <i class="ic"><svg><use href="#treegear"/></svg></i>
  </aside>

  <section class="bottom">
    <div class="b-row">
      <span class="hnd"></span>
      <i class="ic"><svg><use href="#b-a"/></svg></i>
      <i class="ic"><svg><use href="#b-b"/></svg></i>
      <i class="ic"><svg><use href="#b-c"/></svg></i>
      <span class="gap11"></span>
      <span class="hnd"></span>
      <i class="ic"><svg><use href="#b-d"/></svg></i>
      <i class="ic"><svg><use href="#b-e"/></svg></i>
      <i class="ic"><svg><use href="#b-f"/></svg></i>
      <i class="ic"><svg><use href="#b-g"/></svg></i>
      <i class="ic"><svg><use href="#b-h"/></svg></i>
      <i class="ic"><svg><use href="#b-i"/></svg></i>
      <i class="ic"><svg><use href="#b-j"/></svg></i>
      <i class="ic dd-b"><svg><use href="#b-k"/></svg></i>
      <span class="gap3"></span>
      <i class="ic dd-b"><svg><use href="#b-l"/></svg></i>
      <span class="gap3"></span>
      <i class="ic"><svg><use href="#b-m"/></svg></i>
      <i class="ic"><svg><use href="#b-n"/></svg></i>
    </div>
    <div class="b-row row2">
      <span class="hnd"></span>
      <i class="ic"><svg><use href="#b-fx"/></svg></i>
      <i class="ic"><svg><use href="#b-chat"/></svg></i>
      <i class="ic nar"><svg><use href="#b-bottle"/></svg></i>
      <span class="gap9"></span>
      <i class="ic dd-b"><svg><use href="#b-cal"/></svg></i>
      <span class="gap3"></span>
      <i class="ic"><svg><use href="#b-tree"/></svg></i>
      <i class="ic t1 dd-b"><svg><use href="#b-lock"/></svg></i>
      <i class="ic tight"><svg><use href="#b-set"/></svg></i>
      <span class="gap16"></span>
      <span class="hnd"></span>
      <span class="gap1"></span>
      <i class="ic"><svg><use href="#b-rot"/></svg></i>
      <span class="gap10"></span>
      <span class="hnd"></span>
      <i class="ic dd-b solid"><svg><use href="#boss"/></svg></i>
      <span class="gap1"></span>
      <i class="ic dd-b solid"><svg><use href="#pocket"/></svg></i>
      <span class="gap4"></span>
      <i class="ic solid"><svg><use href="#split"/></svg></i>
      <i class="ic t1 solid"><svg><use href="#m-cut"/></svg></i>
      <i class="ic solid"><svg><use href="#hole"/></svg></i>
      <i class="ic t1 solid"><svg><use href="#rib"/></svg></i>
      <span class="gap1"></span>
      <i class="ic solid"><svg><use href="#rib"/></svg></i>
      <i class="ic t1 dd-b solid"><svg><use href="#cube"/></svg></i>
      <span class="gap4"></span>
      <i class="ic solid"><svg><use href="#sweep"/></svg></i>
      <i class="ic solid"><svg><use href="#sweep"/></svg></i>
      <span class="gap16"></span>
      <span class="hnd"></span>
      <i class="ic back6 solid"><svg><use href="#b-an1"/></svg></i>
      <i class="ic solid"><svg><use href="#b-an2"/></svg></i>
      <span class="gap1"></span>
      <i class="ic solid"><svg><use href="#b-an3"/></svg></i>
      <i class="ic solid"><svg><use href="#b-an4"/></svg></i>
    </div>
    <div class="status panel">
      <span class="status-text">选择对象或命令</span>
      <span class="status-input"></span>
      <svg class="status-ic" viewBox="0 0 12 12"><circle cx="4.500" cy="4.500" r="3" fill="#e8ecfb" stroke="#5a5aa0" stroke-width="1.500"/><path d="M7 7l4 3" stroke="#5a5aa0" stroke-width="2"/></svg>
    </div>
  </section>

  <div class="net">
    <div class="net-ball"><span>49%</span></div>
    <div class="net-rates">
      <span class="rate"><b class="up">↑</b>0.09K/s</span>
      <span class="rate"><b class="down">↓</b>0.09K/s</span>
    </div>
    <span class="net-plus">+</span>
  </div>

  <div class="mark">
    <svg class="mark-hex" viewBox="0 0 72 82"><path d="M36 0 72 20v41L36 82 0 61V20z" fill="#3f7fb8" fill-opacity=".6"/><path d="M36 22 54 32 36 42 18 32z" fill="#8a8ab0" fill-opacity=".8"/><path d="M18 32 36 42V64L18 54z" fill="#2a6aa8" fill-opacity=".8"/><path d="M54 32V54L36 64V42z" fill="#3f6fa8" fill-opacity=".9"/><path d="M36 0V22L18 32 0 20zM0 61 18 54 36 64 36 82z" fill="#9088b0" fill-opacity=".45"/></svg>
    <div class="mark-text"><b>3D世界网</b><span>WWW.3DSJW.COM</span></div>
  </div>

  <svg class="compass" viewBox="0 0 44 44"><path d="M20 27 19 8M20 27 3 23M20 27 34 18" stroke="#fff" fill="none"/><text x="19" y="7" class="ax">Z</text><text x="0" y="20" class="ax">y</text><text x="32" y="19" class="ax">x</text></svg>

  <div class="ds-logo">
    <svg viewBox="0 0 30 24"><path d="M10 14c8-2 6-6 0-6l-2 8" fill="none" stroke="#fff" stroke-width="2.500"/><path d="M14 4c4-3 8-2 5 1l-5 4" fill="none" stroke="#d02020" stroke-width="2"/><path d="M24 8c-5 0-6 3-3 4s1 6-5 5" fill="none" stroke="#e8a020" stroke-width="2.500"/></svg>
    <span>CATIA</span>
  </div>
</main>

<footer class="taskbar">
  <span class="task-a"></span><span class="task-b"></span><span class="task-c"></span><span class="task-d"></span><span class="task-e"><em>14:48</em></span>
</footer>
</body>
</html>
```
FILE: styles.css
```css
*{box-sizing:border-box}
html,body{margin:0;height:100%}
body{width:1361px;height:733px;overflow:hidden;display:flex;flex-direction:column;font-family:"Noto Sans","Noto Sans CJK SC",sans-serif;background:#fff}
.defs{position:absolute;width:0;height:0}
ul{list-style:none;margin:0;padding:0}
i{font-style:normal}

.titlebar{height:22px;flex:none;display:flex;align-items:center;padding-bottom:2px;background:#fff;border-bottom:2px solid #777}
.app-logo{width:14px;height:14px;margin-right:6px}
.title-text{font-size:12.700px;color:#999}
.win-controls{margin-left:auto;display:flex;gap:29px;margin-right:18px}
.win-btn{width:12px;height:12px}

.workspace{position:relative;flex:1;min-height:0;overflow:hidden;display:flex;flex-direction:column;background:linear-gradient(#4f4b7a 0,#3b3768 40px,#3a3463 110px,#50305e 380px,#602c5a 620px,#6a2f5e 701px)}
.model{position:absolute;left:420px;top:108px;width:530px;height:530px}

.menu-row{display:flex;align-items:center;gap:7px;padding:6px 0 0 3px;height:24px;flex:none;position:relative}
.menu-logo{width:16px;height:16px;flex:none}
.menu{display:flex;width:346px;height:18px;align-items:center;background:#e8ecfc;padding-left:6px;font-size:11px;color:#111;font-family:"Noto Sans CJK SC",sans-serif}
.menu li{width:43.300px}

.panel{background:linear-gradient(115deg,#e6ebfb,#f0f3fe 45%,#e4e9fa)}
.ic{width:24px;height:24px;flex:none;display:block;position:relative}
.ic svg{width:24px;height:24px;display:block}
.nar{width:16px}
.nar svg{margin-left:-4px}
.tight{margin-left:-3px}
.t1{margin-left:-1px}
.back6{margin-left:-6px}
.wide{margin:0 2px}

.tb-top{position:absolute;left:6px;top:32px;width:229px;height:39px;display:flex;align-items:center;padding:1px 0 0 9px}
.hnd{width:0;position:relative;flex:none}
.hnd::before{content:"";position:absolute;left:-5px;top:-4px;width:11px;height:8px;border-left:2px solid #1b1464;border-top:2px solid #1b1464;filter:drop-shadow(1px 1px 0 #fff) drop-shadow(-1px -1px 0 #fff)}
.hnd-top{position:absolute;left:5px;top:11px}
.hnd-top::before{left:0;top:-10px}

.tree{position:relative;flex:none;margin-top:54px;width:357px;height:623px;background:linear-gradient(#433a7a,#553b78 45%,#6d3a72);padding-top:98px}
.tree-lines{position:absolute;left:0;top:0;width:353px;height:610px;z-index:1}
.tl{fill:none;stroke:#fff;stroke-width:1}
.tl-dash{stroke-dasharray:3 2.500}
.tl-ring{stroke-width:2.200}
.tree-list{height:510px;overflow:hidden;position:relative;z-index:2}
.row{height:37.750px;display:flex;align-items:center;gap:4px}
.l0{padding-left:0;gap:3px}.l1{padding-left:26px}.l2{padding-left:53px}.l3{padding-left:80px}
.node{width:31px;height:31px;flex:none}
.label{height:29px;line-height:28px;padding:0 2px;background:#34306a;border-radius:3px;color:#fff;font-size:20px;white-space:nowrap}
.tree-bars{position:absolute;left:0;top:-1px;width:357px;height:625px;z-index:3}
.bar-frame{fill:none;stroke:#a79bc0;stroke-width:3}
.bar-strip{fill:none;stroke:#5e2a58;stroke-width:3}
.bar-white{fill:none;stroke:#fff;stroke-width:1}

.gfx{position:absolute;left:463px;top:3px;width:518px;height:63px;display:flex;flex-direction:column}
.gfx-title{height:30px;flex:none;background:#fff;display:flex;align-items:center;justify-content:space-between;padding:0 1px 3px 9px;font-size:12px;color:#aaa;font-family:"Noto Sans CJK SC",sans-serif}
.gfx-close{width:19px;height:19px;margin-top:4px;background:#e6e6e6;color:#fff;font-size:10px;font-weight:400;text-align:center;line-height:18px}
.gfx-body{flex:1;display:flex;align-items:flex-start;gap:2px;padding-top:7px;position:relative}
.gfx-grip{width:3px;height:15px;margin:2px 6px 0 4px;border-left:1px solid #a8aed0;border-bottom:1px solid #a8aed0;flex:none}
.sel{height:26px;background:#fff;border:1px solid #777;border-bottom:0;font-size:12px;color:#111;padding:1px 0 0 6px;position:relative;font-family:"Noto Sans CJK SC",sans-serif;flex:none;overflow:hidden;white-space:nowrap}
.sel::after{content:"";position:absolute;right:5px;top:7px;width:6px;height:6px;border-right:1.200px solid #555;border-bottom:1.200px solid #555;transform:rotate(45deg);box-shadow:3px 3px 0 5px #fff}
.w69{width:69px}.w45{width:45px}.w43{width:43px}
.sel-on{background:#e0e0e0;border-color:#aaa;border-bottom:1px solid #aaa;height:25px}
.sel-on::after{box-shadow:none}
.sel-off{background:linear-gradient(90deg,#efefef 26px,#fff 26px);border-color:#fff;color:#888;padding-left:6px}
.sel-off::after{border-color:#bbb}
.gfx-ic{width:24px;height:24px;flex:none;margin-top:-3px}
.gfx-ic.gap{margin-left:4px}

.mdi{position:absolute;left:1301px;top:2px;display:flex;gap:4px}
.mdi-b{width:16px;height:16px;background:#dfe4fb;display:block}
.mdi-b svg{width:16px;height:16px;display:block}

.vtb{position:absolute;width:34px;display:flex;flex-direction:column;align-items:center}
.col1{left:1246px;top:40px;height:162px}
.col1b{left:1242px;top:202px;width:38px;height:88px;padding-left:4px}
.col2{left:1280px;top:40px;height:445px}
.col3{left:1314px;top:40px;height:469px}
.hd{display:block;flex:none;width:26px;position:relative}
.hd::before{content:"";position:absolute;left:0;right:0;bottom:3px;height:4px;border-top:1px solid #a7aed8;border-bottom:1px solid #a7aed8}
.h11{height:11px}.h13{height:13px}.h14{height:14px}.h15{height:15px}.h16{height:16px}.h17{height:17px}.h18{height:18px}
.dd-r::after{content:"";position:absolute;right:-4px;bottom:-1px;border:3px solid transparent;border-top:4px solid #33307a;border-bottom:0}
.dd-n::after{content:"";position:absolute;right:0;bottom:-3px;border:3px solid transparent;border-top:4px solid #33307a;border-bottom:0}
.dd-b::after{content:"";position:absolute;left:8px;bottom:-7px;border:3.500px solid transparent;border-top:5px solid #fff;border-bottom:0}

.bottom{position:absolute;left:536px;top:603px;display:flex;flex-direction:column}
.b-row{display:flex;height:24px;padding-left:5px}
.row2{margin-top:13px}
.b-row .ic svg{filter:drop-shadow(0 0 1px #6a6ab0)}
.b-row .ic.solid svg{filter:none}
.gap1{width:1px}.gap3{width:3px}.gap4{width:4px}.gap9{width:9px}.gap10{width:10px}.gap11{width:11px}.gap16{width:16px}
.status{margin:8px 0 0 -5px;width:732px;height:22px;display:flex;align-items:flex-start;padding-left:10px}
.status-text{font-size:10.500px;line-height:22px;color:#111;font-family:"Noto Sans CJK SC",sans-serif}
.status-input{margin-left:auto;width:199px;height:20px;background:#33306a;border:1px solid #ddd}
.status-ic{width:12px;height:12px;margin:6px 7px 0 4px}

.net{position:absolute;left:1217px;top:564px;width:126px;height:38px;display:flex;align-items:center;background:linear-gradient(90deg,transparent 23px,#e8e8e8 23px,#fff 50%,#ddd);border-radius:0 19px 19px 0}
.net-ball{position:absolute;left:0;top:-6px;width:47px;height:47px;border-radius:50%;border:2px solid #fff;background:radial-gradient(ellipse 8px 3px at 50% 14%,#bfe8cf,transparent),linear-gradient(#0a7a48 50%,#4ccb5e 50%);box-shadow:0 0 2px #777;display:flex;align-items:center;justify-content:center;color:#fff;font-size:14.500px}
.net-rates{margin-left:66px;display:flex;flex-direction:column;gap:3px;font-size:9px;color:#222;line-height:12px}
.rate{display:flex;gap:10px}
.rate b{font-size:10px;font-weight:700;width:6px;margin-left:-16px;font-family:"DejaVu Sans",sans-serif}
.up{color:#e05040}.down{color:#20a050}
.net-plus{position:absolute;right:7px;top:11px;width:16px;height:16px;border-radius:50%;background:#3a80d8;box-shadow:0 0 0 1px #ccc;color:#fff;font-size:14px;line-height:15px;text-align:center;font-weight:700}

.compass{position:absolute;left:1262px;top:618px;width:44px;height:44px;overflow:visible}
.ax{font-size:10px;fill:#fff;font-family:"Liberation Sans",sans-serif}

.mark{position:absolute;left:1078px;top:616px;display:flex;gap:8px;pointer-events:none}
.mark-hex{width:72px;height:82px;flex:none}
.mark-text{display:flex;flex-direction:column;padding-top:12px;font-family:"Liberation Sans","Noto Sans CJK SC",sans-serif}
.mark-text b{font-size:42px;line-height:44px;color:#a98ab2;white-space:nowrap}
.mark-text span{font-size:13.500px;font-weight:700;line-height:16px;letter-spacing:3.800px;color:#7f6f9a;white-space:nowrap}

.ds-logo{position:absolute;left:1310px;top:666px;width:44px;display:flex;flex-direction:column;align-items:flex-start}
.ds-logo svg{width:32px;height:24px}
.ds-logo span{font-size:11px;line-height:10px;font-weight:700;font-style:italic;color:#fff;font-family:"Liberation Sans",sans-serif;margin:-1px 0 0 8px}

.abc-text{font-size:7.500px;fill:#1b1464;font-family:"Liberation Mono",monospace}
.fx-f{font-size:23px;font-style:italic;font-weight:700;fill:#fff;font-family:"Liberation Serif",serif}
.fx-x{font-size:9px;font-weight:700;fill:#fff;font-family:"Liberation Sans",sans-serif}

.taskbar{height:10px;flex:none;display:flex;border-top:2px solid #fff;background:#06090e;overflow:hidden}
.task-a{width:45px;background:#04070b}
.task-b{width:343px;background:#f0f0f0}
.task-c{width:510px}
.task-d{width:40px;background:#333}
.task-e{flex:1;position:relative}
.task-e em{position:absolute;left:317px;top:1px;font-style:normal;font-size:10px;color:#fff;line-height:12px}
```
